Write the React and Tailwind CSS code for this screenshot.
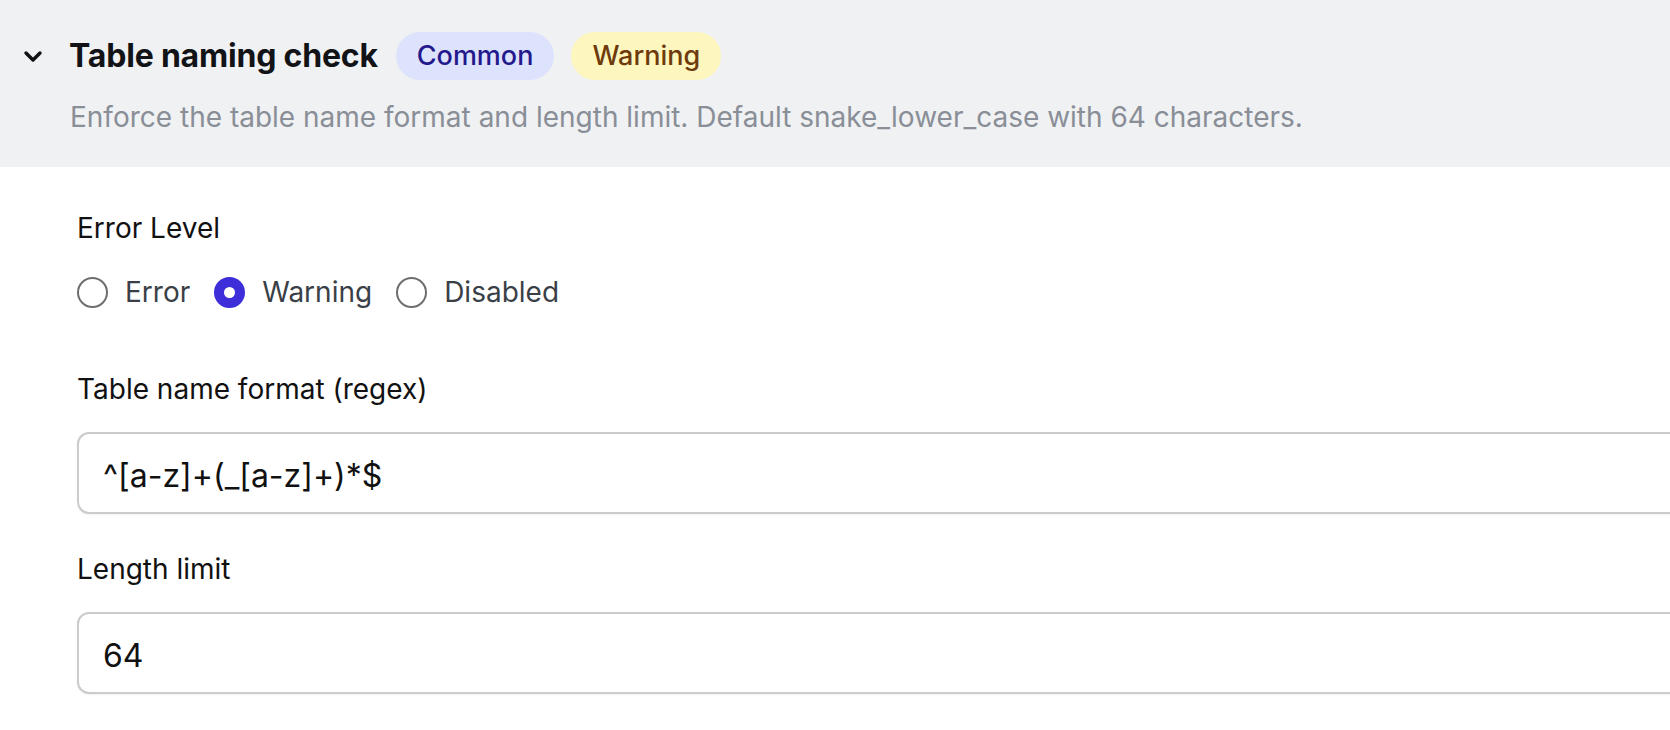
import React, { useState } from "react";

const levels = ["Error", "Warning", "Disabled"];

const Radio = ({ label, checked, onSelect }) => (
  <label
    className="flex items-center gap-[17px] cursor-pointer"
    onClick={onSelect}
  >
    {checked ? (
      <span className="flex h-[31px] w-[31px] items-center justify-center rounded-full bg-[#3d2ed9]">
        <span className="h-[11px] w-[11px] rounded-full bg-white" />
      </span>
    ) : (
      <span className="h-[31px] w-[31px] rounded-full border-2 border-[#6e6e6e] bg-white" />
    )}
    <span className="text-[28px] leading-[40px] text-[#3a3f47]">{label}</span>
  </label>
);

const App = () => {
  const [level, setLevel] = useState("Warning");
  const [format, setFormat] = useState("^[a-z]+(_[a-z]+)*$");
  const [limit, setLimit] = useState("64");

  return (
    <div
      className="min-h-[730px] w-full overflow-hidden bg-white"
      style={{ fontFamily: "Inter, 'Noto Sans', sans-serif" }}
    >
      <div className="bg-[#f0f1f3] pl-[22px] pt-[32px] pb-[32px]">
        <div className="flex items-center">
          <svg
            width="22"
            height="22"
            viewBox="0 0 22 22"
            fill="none"
            stroke="#111"
            strokeWidth="3.4"
            strokeLinecap="round"
            strokeLinejoin="round"
          >
            <path d="M4 8l7 7 7-7" />
          </svg>
          <h2 className="ml-[25px] text-[32px] font-bold leading-[48px] tracking-[-0.2px] text-[#121317]">
            Table naming check
          </h2>
          <span className="ml-[18px] flex h-[48px] items-center rounded-full bg-[#dde3fd] px-[21px] text-[27px] font-medium text-[#24198c]">
            Common
          </span>
          <span className="ml-[17px] flex h-[48px] items-center rounded-full bg-[#fdf7bf] px-[21px] text-[27px] font-medium text-[#6e3a0c]">
            Warning
          </span>
        </div>
        <p className="ml-[48px] mt-[19px] text-[28px] leading-[36px] text-[#898e97]">
          Enforce the table name format and length limit. Default snake_lower_case with 64 characters.
        </p>
      </div>

      <div className="pl-[77px] pt-[41px]">
        <div className="text-[28px] leading-[40px] text-[#111]">Error Level</div>
        <div className="mt-[24px] flex items-center gap-[24px]">
          {levels.map((l) => (
            <Radio
              key={l}
              label={l}
              checked={level === l}
              onSelect={() => setLevel(l)}
            />
          ))}
        </div>

        <div className="mt-[57px] text-[28px] leading-[40px] text-[#111]">
          Table name format (regex)
        </div>
        <input
          value={format}
          onChange={(e) => setFormat(e.target.value)}
          className="mt-[23px] block h-[82px] w-[1640px] rounded-[12px] border-2 border-[#cbcbcb] bg-white px-[24px] pt-[4px] text-[32px] text-[#111] shadow-[0_1px_2px_rgba(0,0,0,0.05)] outline-none"
        />

        <div className="mt-[35px] text-[28px] leading-[40px] text-[#111]">Length limit</div>
        <input
          value={limit}
          onChange={(e) => setLimit(e.target.value)}
          className="mt-[23px] block h-[82px] w-[1640px] rounded-[12px] border-2 border-[#cbcbcb] bg-white px-[24px] pt-[4px] text-[32px] text-[#111] shadow-[0_1px_2px_rgba(0,0,0,0.05)] outline-none"
        />
      </div>
    </div>
  );
};

export default App;
